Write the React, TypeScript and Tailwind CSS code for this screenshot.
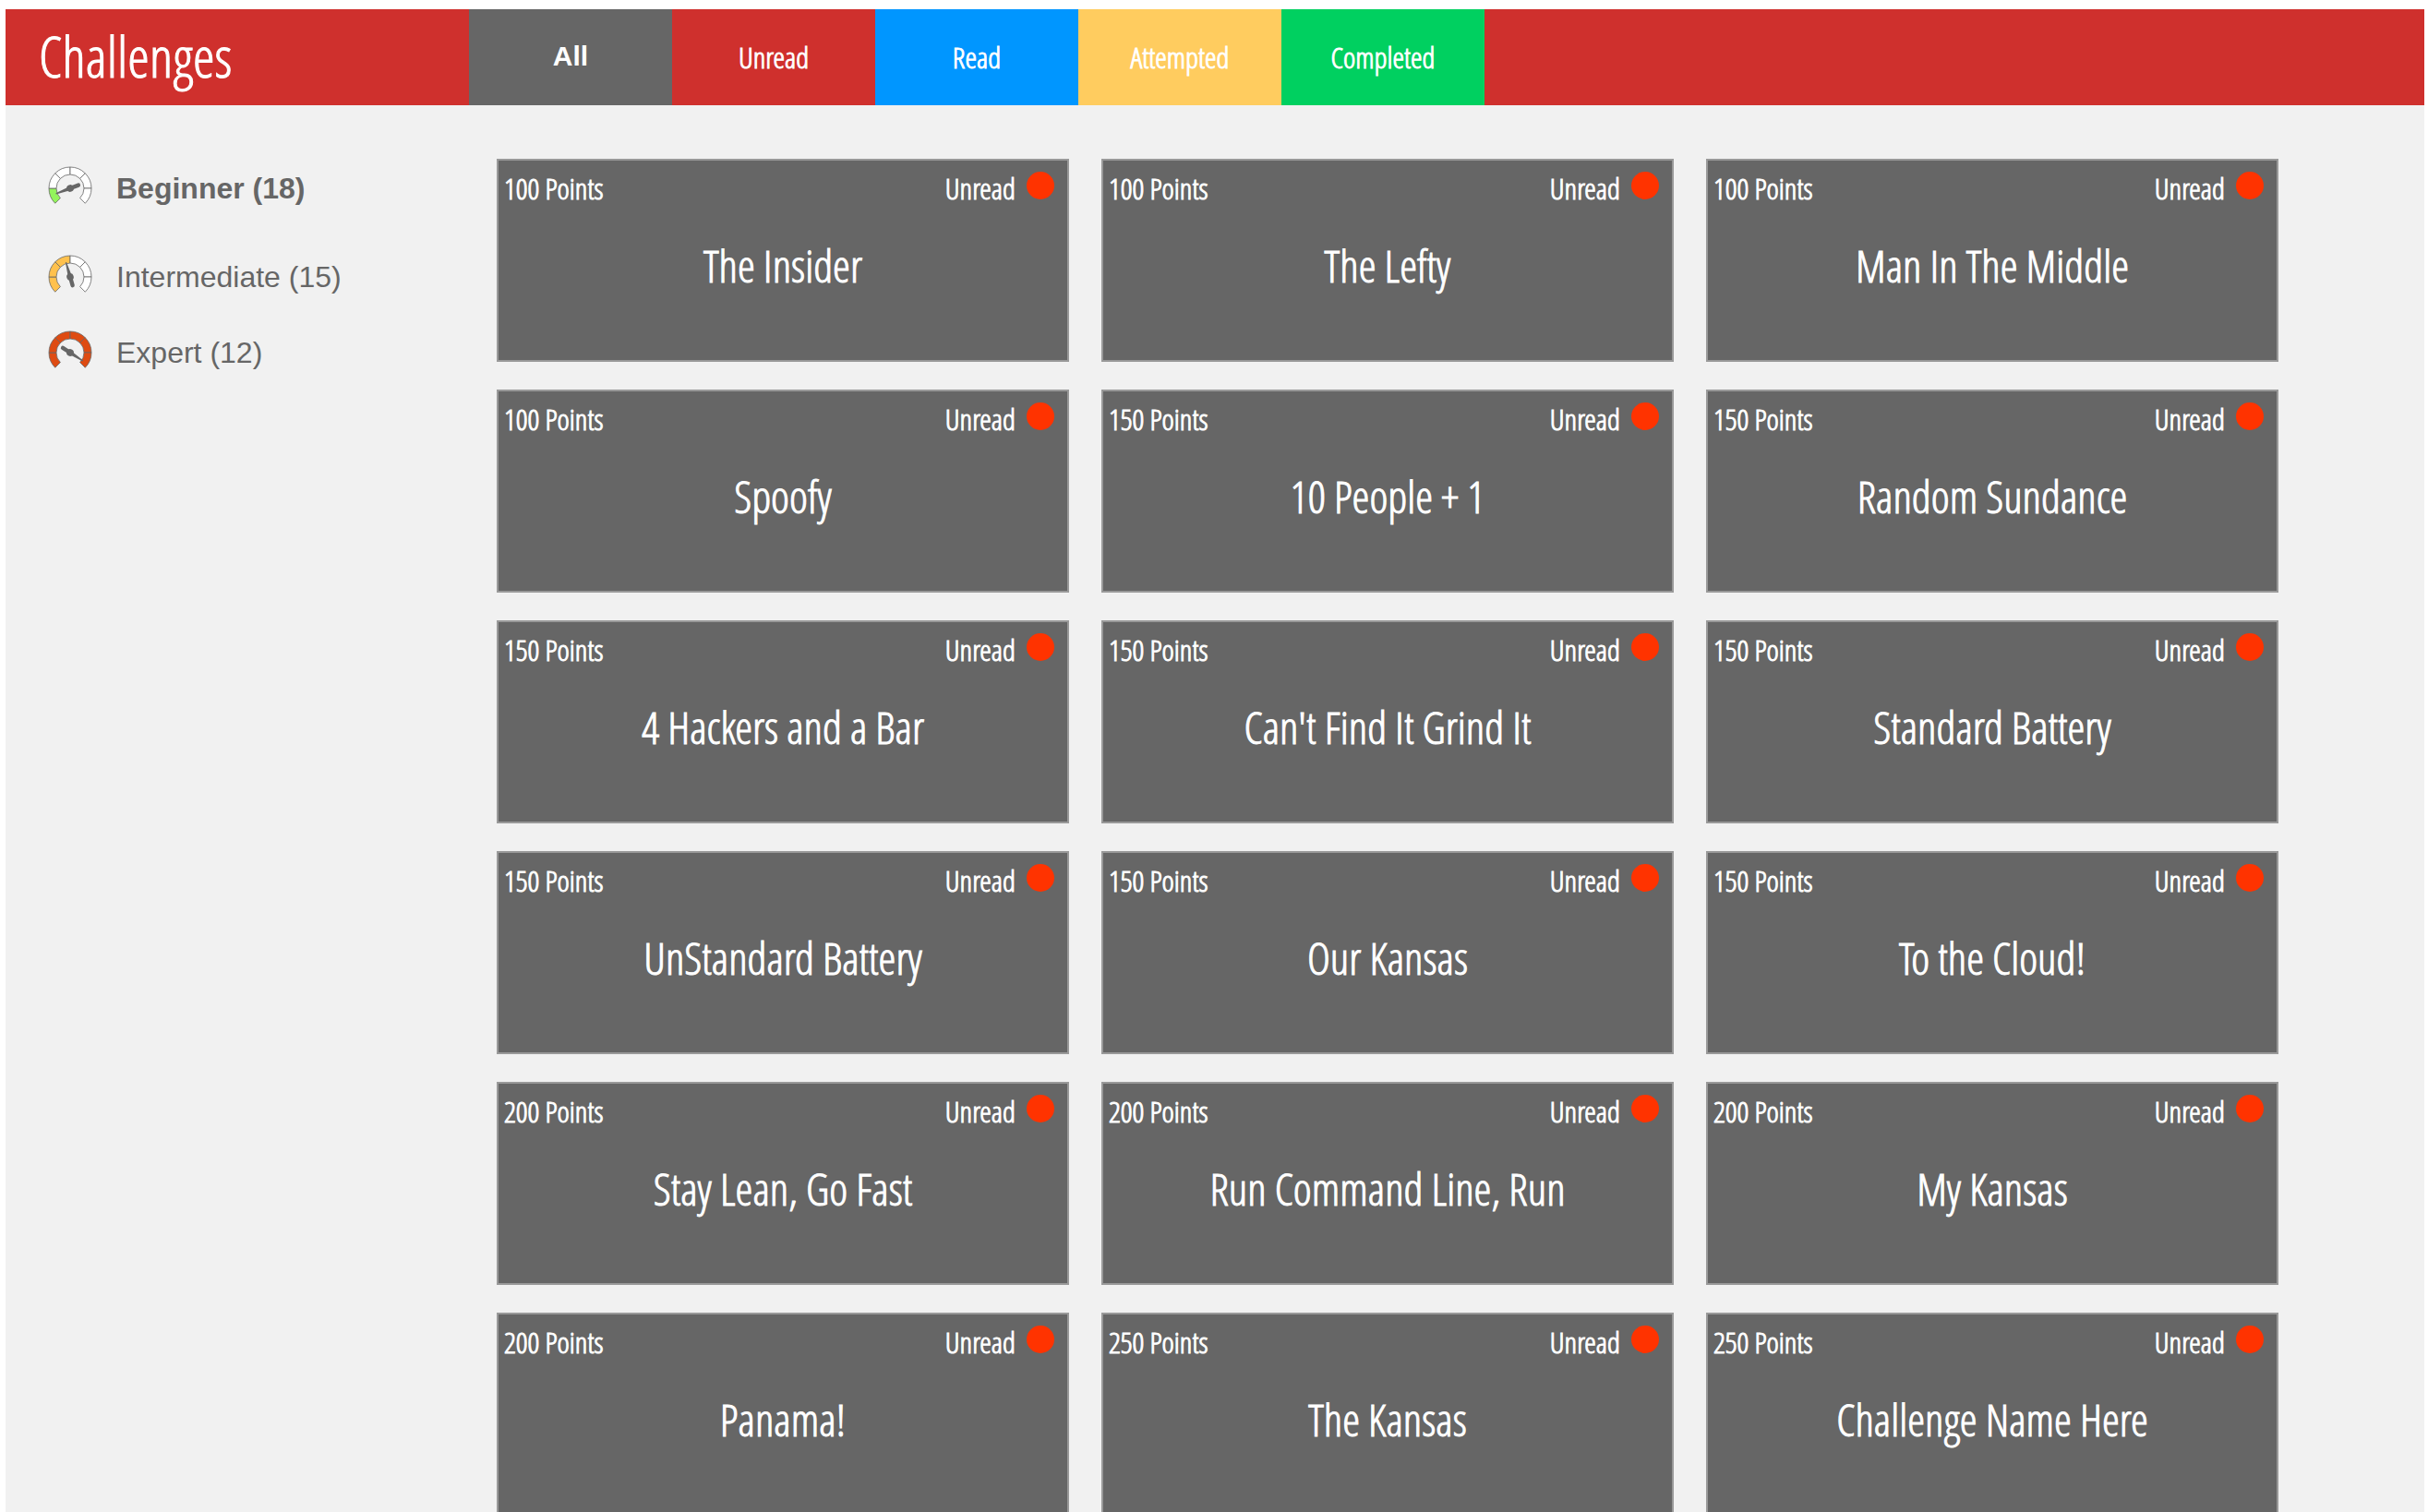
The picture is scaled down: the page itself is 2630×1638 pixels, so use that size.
type Challenge = { name: string; points: number };

const challenges: Challenge[] = [
  { name: "The Insider", points: 100 },
  { name: "The Lefty", points: 100 },
  { name: "Man In The Middle", points: 100 },
  { name: "Spoofy", points: 100 },
  { name: "10 People + 1", points: 150 },
  { name: "Random Sundance", points: 150 },
  { name: "4 Hackers and a Bar", points: 150 },
  { name: "Can't Find It Grind It", points: 150 },
  { name: "Standard Battery", points: 150 },
  { name: "UnStandard Battery", points: 150 },
  { name: "Our Kansas", points: 150 },
  { name: "To the Cloud!", points: 150 },
  { name: "Stay Lean, Go Fast", points: 200 },
  { name: "Run Command Line, Run", points: 200 },
  { name: "My Kansas", points: 200 },
  { name: "Panama!", points: 200 },
  { name: "The Kansas", points: 250 },
  { name: "Challenge Name Here", points: 250 },
];

const tabs = [
  { label: "Unread", color: "bg-[#cf302d]" },
  { label: "Read", color: "bg-[#0096ff]" },
  { label: "Attempted", color: "bg-[#ffcc5f]" },
  { label: "Completed", color: "bg-[#00d060]" },
];

const levels = [
  { label: "Beginner", count: 18, filled: 1, color: "#93f45c", needle: 159, style: "font-bold" },
  { label: "Intermediate", count: 15, filled: 3, color: "#ffc14d", needle: 254, style: "mt-12" },
  { label: "Expert", count: 12, filled: 6, color: "#de4b12", needle: 393, style: "mt-[34px]" },
];

const point = (radius: number, degrees: number) => {
  const a = (degrees * Math.PI) / 180;
  return `${(24 + radius * Math.cos(a)).toFixed(2)} ${(24 + radius * Math.sin(a)).toFixed(2)}`;
};

/* Dial of six 45-degree segments with a needle; the first `filled` ones are coloured. */
function Gauge({ filled, color, needle }: { filled: number; color: string; needle: number }) {
  return (
    <svg viewBox="0 0 48 48" className="size-12 shrink-0" aria-hidden="true">
      {[0, 1, 2, 3, 4, 5].map((i) => {
        const from = 135 + i * 45;
        const to = from + 45;
        return (
          <path
            key={i}
            d={`M${point(23, from)}A23 23 0 0 1 ${point(23, to)}L${point(15, to)}A15 15 0 0 0 ${point(15, from)}Z`}
            fill={i < filled ? color : "#ffffff"}
            stroke="#666666"
            strokeOpacity="0.8"
            strokeWidth="1"
          />
        );
      })}
      <g transform={`rotate(${needle} 24 24)`} fill="#666666">
        <path d="M40.500 23.400L24 21.800L14.500 21.800A2.200 2.200 0 0 0 14.500 26.200L24 26.200L40.500 24.600Z" />
        <circle cx="24" cy="24" r="3.800" />
      </g>
    </svg>
  );
}

function Card({ name, points }: Challenge) {
  return (
    <article className="h-[220px] border-2 border-[#999999] bg-[#666666] px-1.5 pt-1.5 text-white [-webkit-text-stroke:1px_white]">
      <div className="flex h-12 text-[32px] leading-[48px]">
        <span>{points} Points</span>
        <span className="ml-auto">Unread</span>
        <span className="mt-1.5 mr-2 ml-3 size-[30px] rounded-full bg-[#ff3300]" />
      </div>
      <h2 className="mt-6 text-center text-5xl leading-[72px]">{name}</h2>
    </article>
  );
}

export default function App() {
  return (
    <div className="h-screen overflow-hidden bg-white pt-2.5 pr-1 pl-1.5 font-['Open_Sans_Condensed_Light','Open_Sans_Condensed',sans-serif]">
      <div className="min-h-full bg-[#f1f1f1]">
        <header className="flex h-[104px] bg-[#cf302d] text-white">
          <h1 className="w-[502px] shrink-0 pl-9 text-6xl leading-[102px] [-webkit-text-stroke:1px_white]">Challenges</h1>
          <nav className="flex" aria-label="Status">
            <button className="w-[220px] bg-[#666666] pb-1 font-['Liberation_Sans',sans-serif] text-[30px] font-bold">
              All
            </button>
            {tabs.map((t) => (
              <button key={t.label} className={`w-[220px] text-[32px] leading-[48px] [-webkit-text-stroke:1px_white] ${t.color}`}>
                {t.label}
              </button>
            ))}
          </nav>
        </header>
        <div className="flex">
          <aside className="w-[532px] shrink-0 pt-[66px] pl-[46px] font-['Liberation_Sans',sans-serif] text-[32px] text-[#666666]">
            {levels.map((l) => (
              <a key={l.label} href="#" className={`flex h-12 items-center gap-[26px] ${l.style}`}>
                <Gauge filled={l.filled} color={l.color} needle={l.needle} />
                {l.label} ({l.count})
              </a>
            ))}
          </aside>
          <main className="grid flex-1 grid-cols-3 gap-x-[35px] gap-y-[30px] pt-[58px] pr-[158px]">
            {challenges.map((c) => (
              <Card key={c.name} {...c} />
            ))}
          </main>
        </div>
      </div>
    </div>
  );
}
